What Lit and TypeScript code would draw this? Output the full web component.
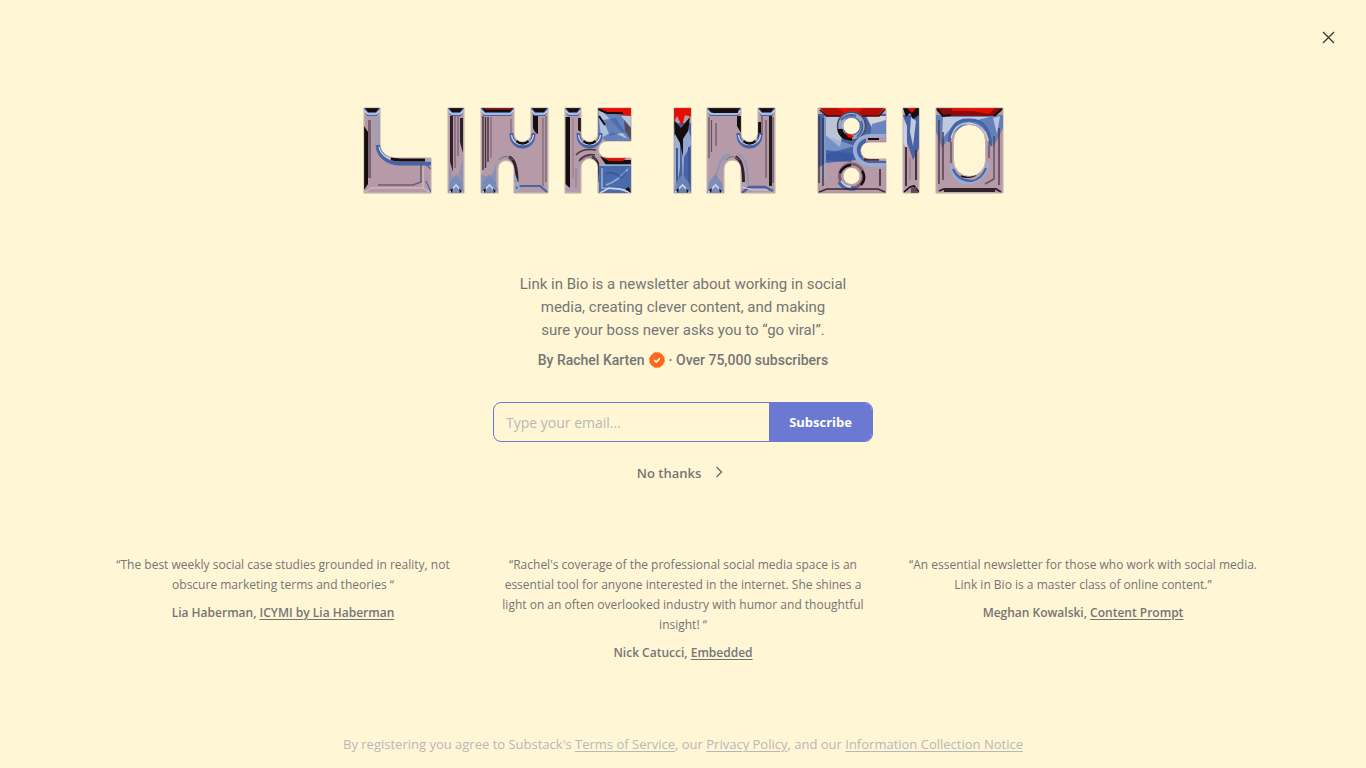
import { LitElement, html, css, svg } from "lit";
import { customElement } from "lit/decorators.js";

const BLUE = "#4664a6";
const SKY = "#94aed6";
const ICE = "#cdd6e6";
const DARK = "#12080e";
const RED = "#e60d06";

interface Block {
  shape: string;
  detail: unknown;
}

const line = (d: string, stroke: string, width: number, opacity = 1) =>
  svg`<path d=${d} fill="none" stroke=${stroke} stroke-width=${width} opacity=${opacity}></path>`;
const area = (d: string, fill: string, opacity = 1) =>
  svg`<path d=${d} fill=${fill} opacity=${opacity}></path>`;

/* Chrome ring under a rounded notch that is cut from the top, centred on x. */
const cup = (x: number) => svg`
  ${line(`M${x - 11} 25C${x - 12} 43 ${x + 12} 43 ${x + 11} 25`, BLUE, 4)}
  ${line(`M${x - 11} 27C${x - 10} 40 ${x + 10} 40 ${x + 11} 27`, ICE, 1.2)}
  ${line(`M${x - 6} 33Q${x} 38 ${x + 6} 33`, DARK, 2.4)}`;
/* Chrome ring over a rounded notch that is cut from the bottom. */
const arch = (x: number, y = 52) => svg`
  ${line(`M${x - 11} 70V${y + 8}Q${x - 10} ${y - 4} ${x} ${y - 4}`, "#a09cb6", 1.4)}
  ${line(`M${x + 3} ${y - 3}Q${x + 11} ${y} ${x + 11} ${y + 22}`, DARK, 3, 0.8)}
  ${line(`M${x - 7} ${y}Q${x} ${y - 7} ${x + 7} ${y}`, "#7d6875", 1)}`;
const foot = (x: number, w: number) => svg`
  ${area(`M${x} 85L${x + 2} 74L${x + w / 2} 66L${x + w - 2} 75L${x + w} 85Z`, "#7089bc", 0.8)}
  ${line(`M${x + 1} 85L${x + w / 2} 77L${x + w - 1} 85`, ICE, 1.6)}
  ${area(`M${x + 2} 82L${x + 5} 80L${x + 4} 85ZM${x + w - 5} 80L${x + w - 2} 83L${x + w - 4} 85Z`, DARK)}`;
const cap = (x: number, w: number) => svg`
  ${area(`M${x} 0H${x + w}L${x + w - 3} 8H${x + 3}Z`, BLUE)}
  ${area(`M${x + 1} 0H${x + w - 1}L${x + w - 4} 4H${x + 4}Z`, DARK)}
  ${line(`M${x} 2L${x + 4} 6H${x + w - 4}L${x + w} 2`, ICE, 1.4)}`;

const blocks: Block[] = [
  {
    shape: "M1 0H17V36C17 45 25 50 34 50H68V85H1Z",
    detail: svg`
      ${area("M1 18L5 24V76L1 82Z", DARK)}
      ${area("M5 12H8V70H5Z", "#5d4b57", 0.7)}
      ${area("M10 8H17V38H12Z", "#98a0ba", 0.7)}
      ${cap(1, 16)}
      ${line("M15 37C16 48 25 55 36 55H68", BLUE, 5)}
      ${line("M16 39C18 48 27 53 38 53H68", ICE, 1.2)}
      ${line("M28 50.5Q32 52 38 52H62", DARK, 3)}
      ${line("M15 77H50L58 74V57", "#42323d", 1.6, 0.6)}
      ${line("M1 85L8 80H60L68 85M60 80V58", "#d9c6ca", 1)}
      ${line("M62 56L68 61M63 73L68 84", BLUE, 1.2)}`,
  },
  {
    shape: "M85 0H101V85H85Z",
    detail: svg`
      ${area("M87 8H90V64L87 54Z", DARK, 0.8)}
      ${area("M97 10H100V45L97 34Z", DARK, 0.85)}
      ${line("M92 8V60M95 8V48", "#66505e", 1)}
      ${cap(85, 16)}${area("M86 56L90 70V82L86 84ZM100 50L95 68V80H100Z", "#7890bd", 0.6)}
      ${foot(85, 16)}`,
  },
  {
    shape: "M118 0H151V25.500A8.500 8.500 0 0 0 168 25.500V0H185V85H151V60.500A8 8 0 0 0 135 60.500V85H118Z",
    detail: svg`
      ${line("M120 8V62M122.500 9V60M125 9V54", "#302029", 1.4, 0.85)}
      ${line("M128 9V50M148 11V26M180 10V78", "#705d69", 1)}
      ${area("M170 7H175V26Q172 25 170 20Z", DARK)}
      ${line("M183 8V74", "#73616d", 1.2)}
      ${cap(118, 33)}${area("M122 0H148V2H122Z", "#731009")}
      ${cap(168, 17)}${cup(159.500)}${arch(143)}
      ${area("M118 66L127 70L133 58V85H118Z", "#6f88bd", 0.6)}
      ${foot(118, 17)}
      ${line("M153 80L158 78H177L184 84", BLUE, 2)}
      ${line("M151 66L156 80L152 85", SKY, 2)}`,
  },
  {
    shape: "M202 0H218V25.500A8.500 8.500 0 0 0 235 25.500V0H268V33H244A8.500 8.500 0 0 0 244 50H268V85H235V59A8.500 8.500 0 0 0 218 59V85H202Z",
    detail: svg`
      ${area("M202.500 9H207V80L202.500 76Z", DARK)}
      ${area("M215 10H218V24L215 22Z", DARK, 0.9)}
      ${line("M210 10V70M213 60V80", "#98818f", 1.2)}
      ${cap(202, 16)}
      ${area("M235 0H268V34H244L235 26Z", "#6682bc")}
      ${area("M235 0L244 8L265 31L249 24L238 30Z", "#b8c7df", 0.9)}
      ${area("M240 12L253 10L262 24L247 28Z", BLUE, 0.7)}
      ${area("M258 8H268V20Z", ICE, 0.8)}
      ${area("M236 0H268V8L252 6L243 5Z", RED)}
      ${line("M235 1L244 5H260M236 8L242 17", DARK, 2)}
      ${area("M261 12L268 20V32L262 23Z", "#554b5d")}
      ${cup(226.500)}${arch(226)}
      ${line("M213 47Q219 40 233 42M216 53Q222 45 232 47", "#49343f", 1.6)}
      ${area("M237 48L245 52H268V57H243Z", DARK)}
      ${area("M240 49H264L260 53H246Z", RED)}
      ${area("M236 58H268V85H236Z", "#4a6bab")}
      ${line("M236 57H268M239 60V80L266 82M243 77Q255 73 265 61", SKY, 1.6)}
      ${line("M243 66Q250 62 258 70L263 64", "#304f91", 2, 0.6)}
      ${line("M237 85L246 80L257 81L268 85", ICE, 1.5)}
      ${area("M262 81L266 79L268 85Z", DARK)}
      ${line("M203 84L208 79L214 84", SKY, 1)}`,
  },
  {
    shape: "M311 0H328V85H311Z",
    detail: svg`
      ${area("M311 15H328V85H311Z", BLUE)}
      ${area("M311 28L317 18V60L313 84H311Z", "#d2d8e4", 0.65)}
      ${area("M318 28L324 17L328 30V37L321 49L320 82Z", "#aebfdd", 0.75)}
      ${area("M311 12L318 20L327 9L325 23L320 31V49L317 35L312 26Z", DARK)}
      ${area("M311 0H328V9L322 7L319 18L314 8L311 14Z", RED)}
      ${line("M326 39V76M314 40V76", "#385898", 2)}
      ${foot(311, 17)}`,
  },
  {
    shape: "M344 0H378V25.500A8.500 8.500 0 0 0 395 25.500V0H412V85H378V60.500A8.500 8.500 0 0 0 361 60.500V85H344Z",
    detail: svg`
      ${line("M346 9V50M348.500 12V44M353 15V38", "#66515f", 1.2)}
      ${area("M374 8H378V25L374 18ZM395 14H398V27L394 30Z", DARK)}
      ${line("M399 7V27M403 12V70M410 9V75", "#66515f", 1.2)}
      ${area("M406 8H409V78H406Z", DARK, 0.9)}
      ${cap(344, 34)}${area("M347 0H375V5H350Z", DARK)}
      ${cap(395, 17)}${cup(386.500)}${arch(369.500)}
      ${line("M352 72L356 58Q359 47 367 46M374 46Q386 49 385 77", "#8b96ba", 1.8)}
      ${foot(344, 17)}
      ${line("M379 85L386 79H402L410 83", BLUE, 2.4)}
      ${line("M379 79L390 82H405", ICE, 1)}`,
  },
  {
    shape:
      "M455 0H523V34H506A8.500 8.500 0 0 0 506 51H523V85H455ZM488.500 9.500A8.500 8.500 0 1 0 488.500 26.500A8.500 8.500 0 1 0 488.500 9.500ZM488.500 59.500A8.500 8.500 0 1 0 488.500 76.500A8.500 8.500 0 1 0 488.500 59.500Z",
    detail: svg`
      ${area("M455 6H523V34L494 52L463 55L455 60Z", BLUE)}
      ${area("M463 9H483L477 39L463 28Z", "#ced5df", 0.85)}
      ${area("M463 28L492 38L463 46Z", SKY, 0.6)}
      ${area("M463 42L492 46L488 54L463 52Z", "#3455a1", 0.75)}
      ${area("M503 8H523V14L509 20Z", "#d6d2d8")}
      ${area("M509 16L523 12V28H507Z", "#6986be")}
      ${area("M455 60L470 54L495 54L523 58V85H455Z", "#b69aa8", 0.8)}
      ${area("M457 0H521L515 8H464Z", "#b20b06")}
      ${area("M474 0H500L495 5H481Z", RED)}
      ${line("M457 2L464 8H516L522 1", "#481018", 1.6)}
      ${line("M456 8V75M460 10V78", "#3f3444", 1.4)}
      ${line("M462 8V72", SKY, 1.4)}
      <circle cx="488.500" cy="18" r="12" fill="none" stroke="#91a7cc" stroke-width="5"></circle>
      <circle cx="488.500" cy="18" r="14" fill="none" stroke="#514052" stroke-width="1.400"></circle>
      ${line("M477 21Q478 30 489 30", DARK, 5)}
      ${line("M478 12Q486 5 493 8M498 13Q502 22 494 29", BLUE, 2)}
      ${area("M482 25L488 26L491 29L486 30Z", RED)}
      ${line("M523 28H508C486 28 487 56 508 57H523", SKY, 4)}
      ${line("M523 31H506C492 32 492 52 506 54H523", BLUE, 2)}
      ${area("M503 29H523V34H503Z", "#b69aa8")}
      ${line("M505 31H516", DARK, 2)}
      ${line("M501 51.500H516", "#5a1c22", 2.4)}
      <circle cx="488.500" cy="68" r="12" fill="none" stroke="#795e6e" stroke-width="3"></circle>
      ${line("M477 65Q480 58 488 57M499 63Q504 70 498 77", DARK, 2.5)}
      ${line("M476 74Q483 83 493 80", BLUE, 4)}
      ${line("M478 73Q482 79 488 79", ICE, 1.5)}
      ${line("M456 84L464 81H515L522 84M517 61V78", "#3c2935", 1.6)}`,
  },
  {
    shape: "M540 0H556V85H540Z",
    detail: svg`
      ${area("M540 7H556V40L550 52L544 34Z", BLUE)}
      ${area("M540 8L544 18V43L540 34ZM548 9L553 13L550 38L547 24Z", ICE, 0.9)}
      ${area("M540 0H556V7L550 11L547 5L543 9Z", DARK)}
      ${area("M544 0H553L549 5Z", RED)}
      ${line("M543 39V78M553 42V72", "#46323e", 2)}
      ${line("M547 50V72", "#917482", 1)}
      ${line("M541 84L547 79L551 78L556 84", DARK, 1.6)}
      ${area("M548 80L553 79L555 85H548Z", "#5b4854")}`,
  },
  {
    shape: "M573 0H640V85H573ZM606.500 16.500A16 16 0 0 0 590.500 32.500V52.500A16 16 0 0 0 622.500 52.500V32.500A16 16 0 0 0 606.500 16.500Z",
    detail: svg`
      ${area("M573 7H640V20L631 38L624 24L606 14L588 27L579 40L573 24Z", "#6480bb")}
      ${area("M580 9H626L615 12Q600 8 588 20L579 31Z", ICE, 0.85)}
      ${area("M630 10L637 8L634 26Z", ICE, 0.8)}
      ${area("M573 0H640L632 8H580Z", "#870b09")}
      ${area("M588 0H632L626 6L610 3H590Z", RED)}
      ${line("M574 1L580 8L588 7M631 8L639 1", DARK, 2)}
      ${line("M576 12V76M580 24V72M636 20V77", "#4f3848", 1.4)}
      ${line("M586 34Q588 11 606 12Q626 11 628 38", BLUE, 3)}
      ${line("M588 30Q592 15 606 15Q624 17 626 38", ICE, 1.2)}
      ${line("M588 34V55M626 33V50M631 28V71L622 76", "#534150", 1.5, 0.8)}
      ${line("M588 56Q590 75 606 75Q622 73 626 54", SKY, 3)}
      ${line("M590 61Q595 73 609 73Q619 71 623 60", BLUE, 2)}
      ${line("M598 68Q606 71 613 67", DARK, 1.6)}
      ${line("M576 83L581 81H633L638 84M581 83H632", "#32202b", 1.8)}`,
  },
];

@customElement("chrome-logo")
class ChromeLogo extends LitElement {
  static styles = css`
    :host {
      display: block;
      width: 642px;
      max-width: 100%;
    }
    .art {
      display: block;
      width: 100%;
    }
  `;

  render() {
    return html`<svg class="art" viewBox="-1 -1 642 87" role="img" aria-label="Link in Bio">
      <defs>
        <filter id="soft" x="-5%" y="-5%" width="110%" height="110%">
          <feGaussianBlur stdDeviation="0.5"></feGaussianBlur>
        </filter>
        ${blocks.map(
          (b, i) => svg`<clipPath id=${"b" + i}><path d=${b.shape} clip-rule="evenodd"></path></clipPath>`,
        )}
      </defs>
      ${blocks.map(
        (b, i) => svg`
          <path d=${b.shape} fill="#b69aa8" fill-rule="evenodd" stroke="#e2d3c4" stroke-width="1"></path>
          <g clip-path=${`url(#b${i})`}><g filter="url(#soft)">${b.detail}</g></g>
          <path d=${b.shape} fill="none" stroke="#8b7a85" stroke-width="1" opacity="0.35"></path>`,
      )}
    </svg>`;
  }
}

const quotes = [
  {
    text: "“The best weekly social case studies grounded in reality, not obscure marketing terms and theories “",
    who: "Lia Haberman",
    where: "ICYMI by Lia Haberman",
  },
  {
    text: "“Rachel's coverage of the professional social media space is an essential tool for anyone interested in the internet. She shines a light on an often overlooked industry with humor and thoughtful insight! “",
    who: "Nick Catucci",
    where: "Embedded",
  },
  {
    text: "“An essential newsletter for those who work with social media. Link in Bio is a master class of online content.”",
    who: "Meghan Kowalski",
    where: "Content Prompt",
  },
];

@customElement("app-root")
class AppRoot extends LitElement {
  static styles = css`
    :host {
      display: flex;
      flex-direction: column;
      box-sizing: border-box;
      min-height: 100vh;
      background: #fff6d5;
      color: #757575;
      font-family: "Open Sans", "Noto Sans", sans-serif;
      text-align: center;
    }
    a {
      color: inherit;
      text-decoration-thickness: 1px;
      text-underline-offset: 2px;
    }
    p {
      margin: 0;
    }
    button {
      font: inherit;
      border: 0;
      cursor: pointer;
    }
    .top {
      display: flex;
      justify-content: flex-end;
      padding: 17px 18px 0;
    }
    .close {
      display: flex;
      align-items: center;
      justify-content: center;
      width: 40px;
      height: 40px;
      padding: 0;
      background: none;
      color: #363737;
    }
    .intro {
      display: flex;
      flex-direction: column;
      align-items: center;
      padding: 50px 24px 0;
    }
    .about {
      max-width: 340px;
      margin-top: 79px;
      font: 15px/23px Roboto, sans-serif;
    }
    .byline {
      display: flex;
      align-items: center;
      gap: 4px;
      margin-top: 8px;
      font: 500 14px/20px Roboto, sans-serif;
    }
    .signup {
      display: flex;
      box-sizing: border-box;
      width: 380px;
      max-width: 100%;
      height: 40px;
      margin-top: 32px;
      border: 1px solid #6b79d3;
      border-radius: 8px;
      overflow: hidden;
    }
    .email {
      flex: 1;
      min-width: 0;
      padding: 0 12px;
      border: 0;
      outline: 0;
      background: none;
      color: #363737;
      font: 14px "Open Sans", sans-serif;
    }
    .email::placeholder {
      color: #b8b8b8;
      opacity: 1;
    }
    .submit {
      padding: 0 20px;
      background: #6b79d3;
      color: #fff;
      font-size: 13px;
      font-weight: 700;
    }
    .skip {
      display: flex;
      align-items: center;
      gap: 8px;
      margin-top: 21px;
      padding: 0;
      background: none;
      color: #757575;
      font-size: 13px;
      font-weight: 600;
      line-height: 20px;
    }
    .quotes {
      display: grid;
      grid-template-columns: repeat(3, 1fr);
      gap: 32px;
      box-sizing: border-box;
      width: 100%;
      max-width: 1168px;
      margin: 72px auto 0;
      font-size: 12px;
      line-height: 20px;
    }
    .quote {
      margin: 0;
    }
    .source {
      margin-top: 8px;
      font-weight: 600;
    }
    .legal {
      margin-top: auto;
      padding: 24px 24px 14px;
      color: #b8b8b8;
      font-size: 13px;
      line-height: 20px;
    }
  `;

  render() {
    return html`
      <header class="top">
        <button class="close" aria-label="Close">
          <svg width="20" height="20" viewBox="0 0 20 20" fill="none" stroke="currentColor" stroke-width="1.250">
            <path d="M5 5L16 16M16 5L5 16"></path>
          </svg>
        </button>
      </header>
      <main>
        <section class="intro">
          <chrome-logo></chrome-logo>
          <p class="about">
            Link in Bio is a newsletter about working in social media, creating clever content, and making<br />
            sure your boss never asks you to “go viral”.
          </p>
          <p class="byline">
            <span>By Rachel Karten</span>
            <svg width="16" height="16" viewBox="0 0 16 16" fill="none" role="img" aria-label="Verified">
              <circle cx="8" cy="8" r="7.400" fill="#ff6719" stroke="#ff6719" stroke-width="0.900" stroke-dasharray="2.900 0.970"></circle>
              <path d="M5.200 8.200L7.200 10.100L10.900 6.200" stroke="#fff" stroke-width="1.600"></path>
            </svg>
            <span>· Over 75,000 subscribers</span>
          </p>
          <form class="signup" @submit=${(e: Event) => e.preventDefault()}>
            <input class="email" type="email" aria-label="Email" placeholder="Type your email..." />
            <button class="submit">Subscribe</button>
          </form>
          <button class="skip">
            No thanks
            <svg width="20" height="20" viewBox="0 0 20 20" fill="none" stroke="currentColor" stroke-width="1.500">
              <path d="M7.500 4L12.500 9L7.500 14"></path>
            </svg>
          </button>
        </section>
        <section class="quotes">
          ${quotes.map(
            (q) => html`<blockquote class="quote">
              <p>${q.text}</p>
              <p class="source">${q.who}, <a href="#">${q.where}</a></p>
            </blockquote>`,
          )}
        </section>
      </main>
      <footer class="legal">
        By registering you agree to Substack's <a href="#">Terms of Service</a>, our <a href="#">Privacy Policy</a>, and
        our <a href="#">Information Collection Notice</a>
      </footer>
    `;
  }
}
